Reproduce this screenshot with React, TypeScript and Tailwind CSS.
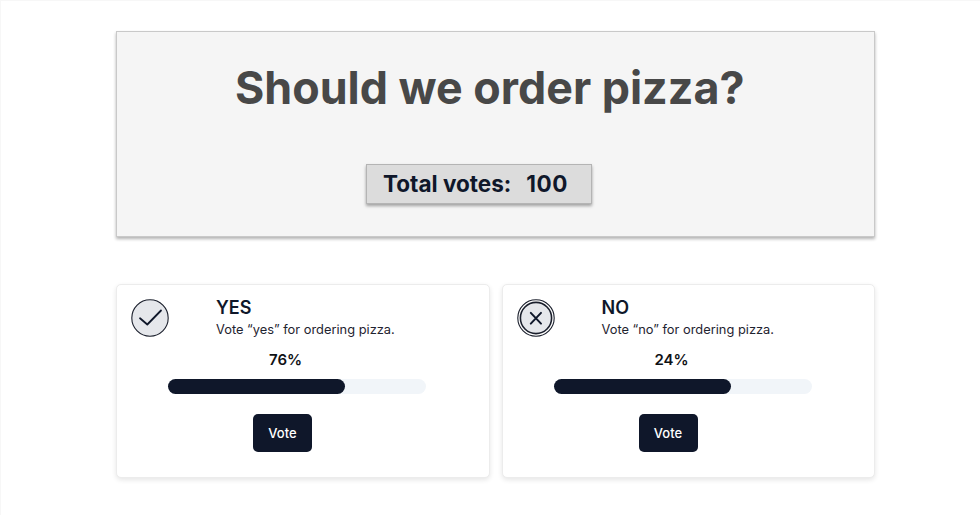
import React from "react";

function CheckIcon() {
  return (
    <svg width="38" height="38" viewBox="0 0 38 38" fill="none">
      <circle cx="19" cy="19" r="18.2" fill="#e5e7eb" stroke="#1a1f2c" strokeWidth="1.1" />
      <path d="M9 19.3 L16.3 25.5 L30 11.5" stroke="#0f172a" strokeWidth="1.8" strokeLinecap="round" strokeLinejoin="round" />
    </svg>
  );
}

function CrossIcon() {
  return (
    <svg width="38" height="38" viewBox="0 0 38 38" fill="none">
      <circle cx="19" cy="19" r="18.2" fill="#fff" stroke="#1a1f2c" strokeWidth="1.1" />
      <circle cx="19" cy="19" r="15.6" fill="#e5e7eb" stroke="#1a1f2c" strokeWidth="1.6" />
      <path d="M13.8 13.9 L24 24.6 M24 13.9 L13.8 24.6" stroke="#0f172a" strokeWidth="2" strokeLinecap="round" />
    </svg>
  );
}

function VoteCard({ icon, title, text, percent }: { icon: React.ReactNode; title: string; text: string; percent: string }) {
  return (
    <div className="h-[194px] bg-white rounded-[5px] border border-[#ececec] shadow-[0_2px_5px_rgba(0,0,0,0.1)] pt-[14px] pl-[14px]">
      <div className="flex">
        <div className="w-[85px] shrink-0">{icon}</div>
        <div>
          <h2 className="text-[18px] leading-[18px] font-semibold text-[#0f172a]">{title}</h2>
          <p className="mt-[5px] text-[12.85px] leading-[16px] text-[#1f2430]">{text}</p>
        </div>
      </div>
      <div className="mt-[13px] ml-[37px] w-[258px] flex flex-col">
        <div className="ml-[101px] text-[15px] leading-[18px] font-semibold text-[#0f1115]">{percent}</div>
        <div className="mt-[10px] w-full h-[15px] rounded-full bg-[#f1f5f9]">
          <div className="w-[177px] h-full rounded-full bg-[#0f172a]" />
        </div>
        <button className="mt-[20px] ml-[85px] w-[59px] h-[38px] pt-[1px] rounded-[5px] bg-[#0f172a] text-[13px] font-medium text-white">Vote</button>
      </div>
    </div>
  );
}

export default function App() {
  return (
    <div className="w-[980px] h-[515px] overflow-hidden bg-white border-t border-l border-[#f7f7f7] font-['Inter',sans-serif]">
      <div className="w-[759px] ml-[115px] mt-[30px]">
        <div className="h-[206px] bg-[#f5f5f5] border border-[#c9c9c9] shadow-[0_2px_3px_rgba(0,0,0,0.3)] flex flex-col items-start pt-[30px]">
          <h1 className="ml-[118px] text-[44.8px] leading-[52px] font-bold text-[#484848]">Should we order pizza?</h1>
          <div className="mt-[50px] ml-[249px] w-[226px] h-[40px] pl-[16px] bg-[#dcdcdc] border border-[#b4b4b4] shadow-[0_2px_3px_rgba(0,0,0,0.35)] flex items-center gap-[15px] text-[22.5px] font-bold text-[#0f172a]">
            <span>Total votes:</span>
            <span className="tracking-[0.5px]">100</span>
          </div>
        </div>
        <div className="mt-[47px] grid grid-cols-[374px_373.5px] gap-[11.5px]">
          <VoteCard icon={<CheckIcon />} title="YES" text="Vote “yes” for ordering pizza." percent="76%" />
          <VoteCard icon={<CrossIcon />} title="NO" text="Vote “no” for ordering pizza." percent="24%" />
        </div>
      </div>
    </div>
  );
}
